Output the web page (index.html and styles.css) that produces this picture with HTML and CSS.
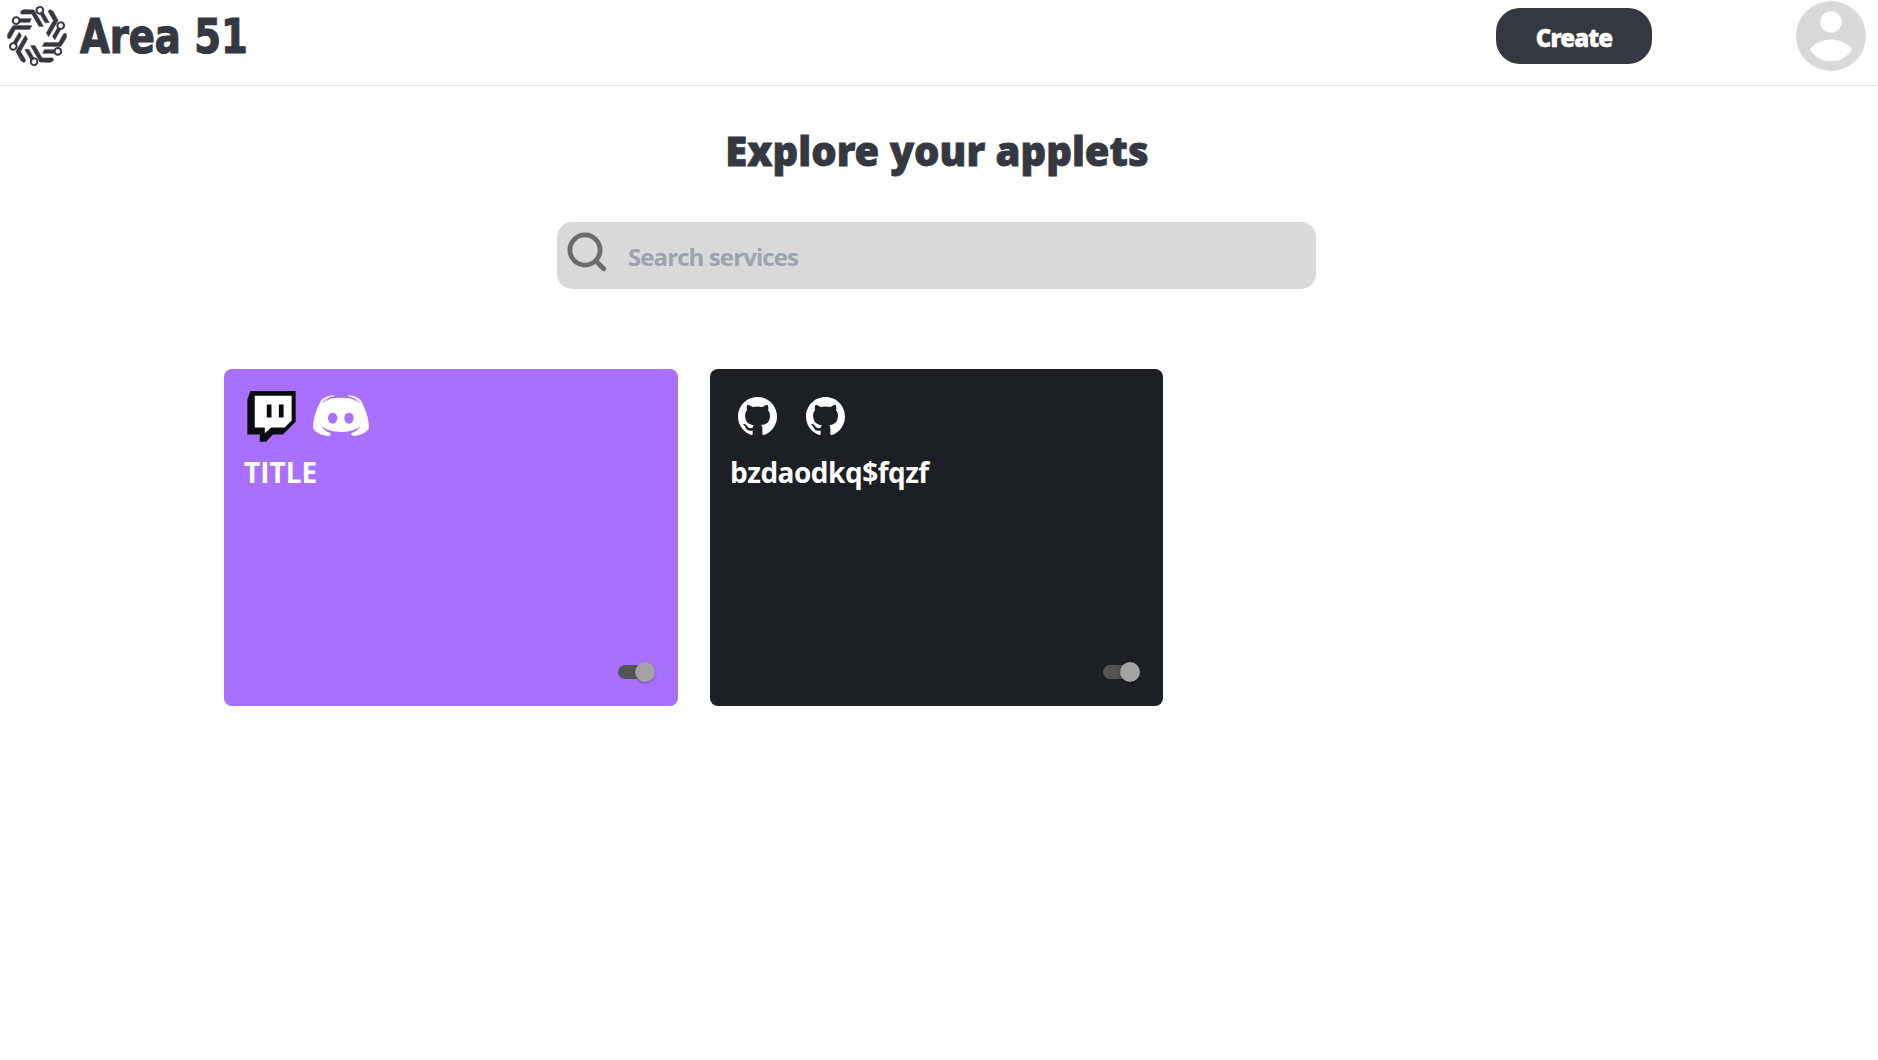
FILE: index.html
```html
<!DOCTYPE html>
<html lang="en">
<head>
<meta charset="utf-8">
<title>Area 51</title>
<link rel="stylesheet" href="styles.css">
</head>
<body>
<svg class="defs" aria-hidden="true">
  <symbol id="github" viewBox="0 0 16 16"><path fill="#fff" d="M8 0C3.58 0 0 3.58 0 8c0 3.54 2.29 6.53 5.47 7.59.4.07.55-.17.55-.38 0-.19-.01-.82-.01-1.49-2.01.37-2.53-.49-2.69-.94-.09-.23-.48-.94-.82-1.13-.28-.15-.68-.52-.01-.53.63-.01 1.08.58 1.23.82.72 1.21 1.87.87 2.33.66.07-.52.28-.87.51-1.07-1.78-.2-3.64-.89-3.64-3.95 0-.87.31-1.59.82-2.15-.08-.2-.36-1.02.08-2.12 0 0 .67-.21 2.2.82.64-.18 1.32-.27 2-.27s1.36.09 2 .27c1.53-1.04 2.2-.82 2.2-.82.44 1.1.16 1.92.08 2.12.51.56.82 1.27.82 2.15 0 3.07-1.87 3.75-3.65 3.95.29.25.54.73.54 1.48 0 1.07-.01 1.93-.01 2.2 0 .21.15.46.55.38A8.01 8.01 0 0 0 16 8c0-4.42-3.58-8-8-8z"/></symbol>
</svg>
<header class="topbar">
  <a class="brand">
    <svg class="brand-mark" viewBox="-93 -93 186 186">
      <defs>
        <g id="branch" stroke="#363841">
          <path fill="#363841" stroke-width="2" stroke-linejoin="round" d="M-88 6 V-5 L-72 -31 H-16 L-22 -20 H-65 L-81 8 Z"/>
          <path fill="#363841" stroke-width="1.500" d="M-54 -52 H-17 L-22 -41 H-54 Z"/>
          <circle cx="-62.500" cy="-46" r="10" fill="none" stroke-width="6"/>
        </g>
      </defs>
      <use href="#branch"/>
      <use href="#branch" transform="rotate(60)"/>
      <use href="#branch" transform="rotate(120)"/>
      <use href="#branch" transform="rotate(180)"/>
      <use href="#branch" transform="rotate(240)"/>
      <use href="#branch" transform="rotate(300)"/>
    </svg>
    <span class="brand-name">Area 51</span>
  </a>
  <button class="create">Create</button>
  <svg class="avatar" viewBox="0 0 70 70">
    <circle cx="35" cy="35" r="35" fill="#d9d9d9"/>
    <circle cx="35" cy="21" r="10.700" fill="#fff"/>
    <path fill="#fff" d="M14 48.500C18 42 27 38.500 35 38.500S52 42 56 48.500C52 55.500 44 60.300 35 60.300S18 55.500 14 48.500Z"/>
  </svg>
</header>
<main>
  <h1>Explore your applets</h1>
  <label class="search">
    <svg class="search-icon" viewBox="0 0 40 40" fill="none" stroke="#6b6b6b" stroke-width="4.800" stroke-linecap="round"><circle cx="18" cy="18" r="15.100"/><path d="M29.500 29.500L36.700 36.700"/></svg>
    <input type="text" placeholder="Search services">
  </label>
  <section class="cards">
    <article class="card purple">
      <div class="icons">
        <svg class="twitch" viewBox="98 93 146 152">
          <path fill="#0c0c0e" d="M108 93H243V185L205 223H175L155 244H136V223H99V118Z"/>
          <path fill="#fff" d="M121 107H231V181L210 202H170L151 219V202H121Z"/>
          <path fill="#0c0c0e" d="M157 133H171V172H157ZM193 133H207V172H193Z"/>
        </svg>
        <svg class="discord" viewBox="294 106 168 123">
          <path fill="#fff" fill-rule="evenodd" d="M316 127C319 121 323 117 328 115C338 110 347 108 356 107L357 110C343 113 332 118 323 124C340 116 359 114 378 114S416 116 433 124C424 118 413 113 399 110L400 107C409 108 418 110 428 115C433 117 437 121 440 127C453 150 462 180 462 206C452 221 435 228 415 229Q407 226 410 220C420 217 430 211 436 200C418 213 399 217 378 217S338 213 320 200C326 211 336 217 346 220Q349 226 341 229C321 228 304 221 294 206C294 180 303 150 316 127ZM353 159C345 159 339 166 339 175S345 192 353 192S367 184 367 175S361 159 353 159ZM402 159C394 159 388 166 388 175S394 192 402 192S416 184 416 175S410 159 402 159Z"/>
          <path d="M320 129C326 125 336 121 344 119M436 129C430 125 420 121 412 119" fill="none" stroke="#a970ff" stroke-width="2"/>
        </svg>
      </div>
      <h2>TITLE</h2>
      <div class="toggle"></div>
    </article>
    <article class="card dark">
      <div class="icons">
        <svg class="github"><use href="#github"/></svg>
        <svg class="github"><use href="#github"/></svg>
      </div>
      <h2 class="long">bzdaodkq$fqzf</h2>
      <div class="toggle"></div>
    </article>
  </section>
</main>
</body>
</html>
```
FILE: styles.css
```css
* { box-sizing: border-box; }
body { margin: 0; background: #fff; color: #363841; font-family: "Noto Sans", "Open Sans", sans-serif; }
.defs { display: none; }
.topbar { height: 86px; border-bottom: 1px solid #e5e5e5; display: flex; align-items: flex-start; padding: 0 12px 0 6px; }
.brand { display: flex; margin-right: auto; }
.brand-mark { width: 62px; height: 62px; margin-top: 5px; }
.brand-name { margin: 8px 0 0 12px; font: bold 47.5px/58px "DejaVu Sans Condensed", "DejaVu Sans", sans-serif; -webkit-text-stroke: 1.2px #363841; white-space: nowrap; transform: scaleX(.9); transform-origin: 0 0; }
.create { width: 156px; height: 56px; margin-top: 8px; padding: 4px 0 0; border: 0; border-radius: 24px; background: #363841; color: #fff; font: 900 24px/32px "Noto Sans", sans-serif; letter-spacing: -.95px; -webkit-text-stroke: .4px #fff; }
.avatar { width: 70px; height: 70px; margin: 1px 0 0 144px; }
main { display: flex; flex-direction: column; }
h1 { margin: 37px 0 0; padding-right: 4px; text-align: center; font-weight: 900; font-size: 40px; line-height: 56px; white-space: nowrap; -webkit-text-stroke: .8px #363841; }
.search { display: flex; align-items: flex-start; width: 759px; height: 67px; margin: 43px 0 0 557px; border-radius: 15px; background: #d9d9d9; padding: 10px 10px 0; }
.search-icon { width: 40px; height: 40px; margin: .4px 0 0 .4px; }
input { flex: 1; height: 50px; margin: -1px 0 0 20.6px; padding: 0; border: 0; outline: 0; background: none; font: 700 24px "Open Sans", sans-serif; letter-spacing: -.9px; }
input::placeholder { color: #9ca3af; opacity: 1; }
.cards { display: flex; gap: 32px; margin: 80px 0 0 224px; }
.card { display: flex; flex-direction: column; width: 454px; height: 337px; border-radius: 8px; padding: 22px 20px; }
.card + .card { width: 453px; }
.purple { background: #a970ff; }
.dark { background: #1c1f24; }
.icons { display: flex; height: 52px; }
.twitch { width: 49px; height: 51px; margin-left: 3.4px; }
.discord { width: 56px; height: 41px; margin: 4px 0 0 16.6px; }
.github { width: 39px; height: 39px; margin: 6.4px 0 0 8.4px; }
.github + .github { margin-left: 29px; }
h2 { margin: 9px 0 0; color: #fff; font: 700 28px/40px "Open Sans", sans-serif; white-space: nowrap; }
.long { letter-spacing: -.5px; }
.toggle { position: relative; align-self: flex-end; width: 34px; height: 14px; margin: auto 6px 5px 0; border-radius: 7px; background: #545454; }
.toggle::after { content: ""; position: absolute; left: 17px; top: -3px; width: 20px; height: 20px; border-radius: 50%; background: #a3a3a3; box-shadow: 0 1px 3px rgba(0,0,0,.35); }
```
